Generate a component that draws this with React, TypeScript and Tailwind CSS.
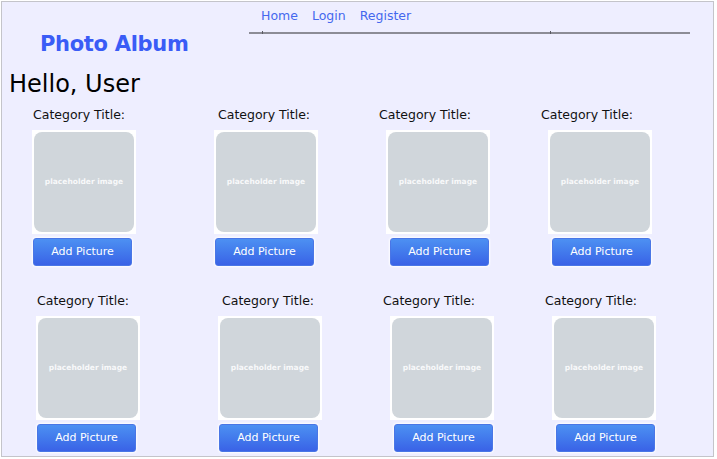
import React from "react";

type Cell = {
  width: string;
  titleMl: string;
  btnMl: string;
};

const cells: Cell[] = [
  { width: "w-[182px]", titleMl: "ml-[1px]", btnMl: "ml-[1px]" },
  { width: "w-[172px]", titleMl: "ml-[4px]", btnMl: "ml-[1px]" },
  { width: "w-[162px]", titleMl: "-ml-[7px]", btnMl: "ml-[4px]" },
  { width: "w-[162px]", titleMl: "-ml-[7px]", btnMl: "ml-[4px]" },
];

const CategoryCell: React.FC<{ cell: Cell }> = ({ cell }) => {
  return (
    <div className={cell.width + " flex flex-col items-start shrink-0"}>
      <div className={cell.titleMl + " text-[12.5px] leading-[16px] text-[#111]"}>
        Category Title:
      </div>
      <div className="mt-[7px] w-[104px] h-[104px] bg-white p-[2px]">
        <div className="w-full h-full rounded-lg bg-[#d0d6db] flex items-center justify-center">
          <span className="text-[7.5px] font-bold text-[#f8f9fa]">placeholder image</span>
        </div>
      </div>
      <button
        className={
          cell.btnMl +
          " mt-[4px] w-[99px] h-[28px] rounded-[3px] border border-[#4a76e6] bg-linear-to-b from-[#4d90f2] to-[#3a62e6] text-white text-[11px] shadow-[0_0_2px_1px_rgba(255,255,255,0.85)]"
        }
      >
        Add Picture
      </button>
    </div>
  );
};

const App: React.FC = () => {
  return (
    <div className="min-h-screen bg-white pl-[1px] pt-[1px] font-['DejaVu_Sans',Verdana,sans-serif]">
      <div className="w-[713px] h-[456px] border border-[#c4c4ca] bg-[#eeeeff] overflow-hidden">
        <div className="flex">
          <div className="w-[247px] pt-[29px] pl-[38px]">
            <h1 className="text-[21px] leading-[26px] font-bold tracking-[-0.3px] text-[#3a5cf6]">
              Photo Album
            </h1>
          </div>
          <div className="relative w-[441px] h-[32px] border-b-2 border-[#8c8c96]">
            <nav className="flex gap-[14px] pl-[12px] pt-[6px] text-[12.5px] leading-[16px] text-[#4468ee]">
              <a href="#">Home</a>
              <a href="#">Login</a>
              <a href="#">Register</a>
            </nav>
            <span className="absolute left-[13px] -bottom-[2px] w-[1px] h-[3px] bg-[#5a5a62]" />
            <span className="absolute left-[301px] -bottom-[2px] w-[1px] h-[3px] bg-[#5a5a62]" />
          </div>
        </div>
        <h2 className="mt-[13px] pl-[7px] text-[24px] leading-[28px] text-black">Hello, User</h2>
        <div className="mt-[9px] flex pl-[30px]">
          {cells.map((c, i) => (
            <CategoryCell key={i} cell={c} />
          ))}
        </div>
        <div className="mt-[27px] flex pl-[34px]">
          {cells.map((c, i) => (
            <CategoryCell key={i} cell={c} />
          ))}
        </div>
      </div>
    </div>
  );
};

export default App;
